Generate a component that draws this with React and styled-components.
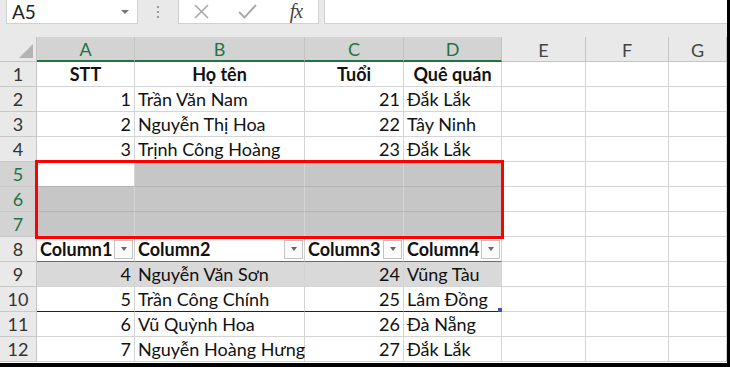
import React from 'react'
import styled, { createGlobalStyle } from 'styled-components'

const Global = createGlobalStyle`
  body {
    margin: 0;
    background: #ffffff;
  }
`

const FONT = `Lato, "Noto Sans", sans-serif`

const Frame = styled.div`
  width: 730px;
  height: 367px;
  box-sizing: border-box;
  border-right: 3px solid #000;
  border-bottom: 4px solid #000;
  background: #e9e9e9;
  overflow: hidden;
  display: flex;
  flex-direction: column;
  font-family: ${FONT};
`

const FormulaBar = styled.div`
  height: 37px;
  flex: none;
  display: flex;
  align-items: flex-start;
  padding-left: 6px;
  box-sizing: border-box;
`

const NameBox = styled.div`
  width: 132px;
  height: 24px;
  box-sizing: border-box;
  background: #fff;
  border: 1px solid #d0d0d0;
  border-top: none;
  display: flex;
  align-items: center;
  justify-content: space-between;
  padding: 0 8px 0 5px;
  font-size: 19px;
  color: #222;
`

const Caret = styled.span`
  width: 0;
  height: 0;
  border-left: 4px solid transparent;
  border-right: 4px solid transparent;
  border-top: 4px solid #777;
`

const Dots = styled.div`
  width: 40px;
  height: 24px;
  display: flex;
  flex-direction: column;
  align-items: center;
  justify-content: center;
  gap: 3px;
  & > i {
    width: 2px;
    height: 2px;
    background: #9a9a9a;
  }
`

const ButtonBox = styled.div`
  width: 141px;
  height: 24px;
  box-sizing: border-box;
  background: #fff;
  border: 1px solid #d0d0d0;
  border-top: none;
  display: flex;
  align-items: center;
  padding-left: 14px;
`

const IconSlot = styled.span`
  width: ${p => p.$w}px;
  display: flex;
  align-items: center;
  justify-content: center;
`

const Fx = styled.span`
  font-family: "Liberation Serif", serif;
  font-style: italic;
  font-size: 20px;
  color: #444;
  letter-spacing: -1px;
`

const FormulaInput = styled.div`
  flex: 1;
  height: 24px;
  margin-left: 5px;
  background: #fff;
  border-left: 1px solid #d0d0d0;
  border-bottom: 1px solid #d0d0d0;
  box-sizing: border-box;
`

const Sheet = styled.div`
  flex: 1;
  display: grid;
  grid-template-columns: 37px 98px 170px 99px 98px 84px 83px 1fr;
  grid-template-rows: repeat(13, 25px);
  background: #fff;
`

const Corner = styled.div`
  grid-row: 1;
  grid-column: 1;
  background: #e9e9e9;
  border-right: 1px solid #c4c4c4;
  border-bottom: 1px solid #c4c4c4;
  position: relative;
  &::after {
    content: '';
    position: absolute;
    right: 3px;
    bottom: 3px;
    border-left: 14px solid transparent;
    border-bottom: 14px solid #b4b4b4;
  }
`

const ColHead = styled.div`
  grid-row: 1;
  grid-column: ${p => p.$c};
  background: ${p => (p.$sel ? '#d3d3d3' : '#e9e9e9')};
  color: ${p => (p.$sel ? '#217346' : '#444')};
  border-right: 1px solid #c4c4c4;
  border-bottom: ${p => (p.$sel ? '2px solid #217346' : '1px solid #c4c4c4')};
  font-size: 18px;
  display: flex;
  align-items: center;
  justify-content: center;
  box-sizing: border-box;
  padding-top: 1px;
`

const RowHead = styled.div`
  grid-row: ${p => p.$r};
  grid-column: 1;
  background: ${p => (p.$sel ? '#d3d3d3' : '#e9e9e9')};
  color: ${p => (p.$sel ? '#217346' : '#333')};
  border-right: 1px solid #c4c4c4;
  border-bottom: 1px solid #c8c8c8;
  font-size: 18px;
  display: flex;
  align-items: center;
  justify-content: center;
  box-sizing: border-box;
`

const Cell = styled.div`
  grid-row: ${p => p.$r};
  grid-column: ${p => p.$c};
  background: ${p => p.$bg || '#fff'};
  border-right: 1px solid #d4d4d4;
  border-bottom: 1px solid ${p => p.$line || '#d4d4d4'};
  border-top: ${p => (p.$top ? `1px solid ${p.$top}` : 'none')};
  margin-top: ${p => (p.$top ? '-1px' : '0')};
  color: #111;
  font-size: 18px;
  font-weight: ${p => (p.$bold ? 700 : 400)};
  display: flex;
  align-items: center;
  justify-content: ${p => p.$align || 'flex-start'};
  padding: 0 3px;
  box-sizing: border-box;
  white-space: nowrap;
  position: relative;
`

const FilterBtn = styled.span`
  width: 19px;
  height: 19px;
  box-sizing: border-box;
  border: 1px solid #c4c4c4;
  background: #fafafa;
  display: flex;
  align-items: center;
  justify-content: center;
  margin-right: -2px;
  &::after {
    content: '';
    border-left: 3px solid transparent;
    border-right: 3px solid transparent;
    border-top: 4px solid #666;
  }
`

const ResizeHandle = styled.span`
  position: absolute;
  right: -1px;
  bottom: -1px;
  width: 4px;
  height: 4px;
  background: #3a56b0;
`

const Selection = styled.div`
  grid-row: 6 / 9;
  grid-column: 2 / 6;
  margin: -2px -2px -2px -2px;
  border: 3px solid #ff0000;
  pointer-events: none;
  z-index: 2;
`

const top = [
  ['STT', 'Họ tên', 'Tuổi', 'Quê quán'],
  [1, 'Trần Văn Nam', 21, 'Đắk Lắk'],
  [2, 'Nguyễn Thị Hoa', 22, 'Tây Ninh'],
  [3, 'Trịnh Công Hoàng', 23, 'Đắk Lắk'],
]

const bottom = [
  [4, 'Nguyễn Văn Sơn', 24, 'Vũng Tàu'],
  [5, 'Trần Công Chính', 25, 'Lâm Đồng'],
  [6, 'Vũ Quỳnh Hoa', 26, 'Đà Nẵng'],
  [7, 'Nguyễn Hoàng Hưng', 27, 'Đắk Lắk'],
]

const cols = ['A', 'B', 'C', 'D', 'E', 'F', 'G']

const App = () => {
  const cells = []

  for (let r = 1; r <= 12; r++) {
    const gr = r + 1
    for (let c = 2; c <= 8; c++) {
      const key = `${r}-${c}`
      const inTable = c <= 5
      let content = null
      let props = { $r: gr, $c: c }

      if (r === 1 && inTable) {
        content = top[0][c - 2]
        props.$bold = true
        props.$align = 'center'
      } else if (r >= 2 && r <= 4 && inTable) {
        content = top[r - 1][c - 2]
        props.$align = typeof content === 'number' ? 'flex-end' : 'flex-start'
      } else if (r >= 5 && r <= 7 && inTable) {
        props.$bg = r === 5 && c === 2 ? '#fff' : '#c6c6c6'
        props.$line = '#b4b4b4'
      } else if (r === 8 && inTable) {
        props.$bold = true
        props.$align = 'space-between'
        content = (
          <>
            <span>{`Column${c - 1}`}</span>
            <FilterBtn />
          </>
        )
      } else if (r >= 9 && inTable) {
        content = bottom[r - 9][c - 2]
        props.$align = typeof content === 'number' ? 'flex-end' : 'flex-start'
        if (r === 9) {
          props.$bg = '#d9d9d9'
          props.$top = '#6a6a6a'
        }
        if (r === 10) props.$line = '#222'
      }

      cells.push(
        <Cell key={key} {...props}>
          {content}
          {r === 10 && c === 5 && <ResizeHandle />}
        </Cell>
      )
    }
  }

  return (
    <Frame>
      <Global />
      <FormulaBar>
        <NameBox>
          <span>A5</span>
          <Caret />
        </NameBox>
        <Dots>
          <i />
          <i />
          <i />
        </Dots>
        <ButtonBox>
          <IconSlot $w={16}>
            <svg width="15" height="15" viewBox="0 0 15 15">
              <path d="M1 1L14 14M14 1L1 14" stroke="#a8a8a8" strokeWidth="1.6" />
            </svg>
          </IconSlot>
          <IconSlot $w={76}>
            <svg width="19" height="15" viewBox="0 0 19 15">
              <path d="M1 8L6.5 13.5L18 1" stroke="#a8a8a8" strokeWidth="1.9" fill="none" />
            </svg>
          </IconSlot>
          <IconSlot $w={22}>
            <Fx>fx</Fx>
          </IconSlot>
        </ButtonBox>
        <FormulaInput />
      </FormulaBar>

      <Sheet>
        <Corner />
        {cols.map((l, i) => (
          <ColHead key={l} $c={i + 2} $sel={i < 4}>
            {l}
          </ColHead>
        ))}
        {Array.from({ length: 12 }, (_, i) => (
          <RowHead key={i} $r={i + 2} $sel={i >= 4 && i <= 6}>
            {i + 1}
          </RowHead>
        ))}
        {cells}
        <Selection />
      </Sheet>
    </Frame>
  )
}

export default App
